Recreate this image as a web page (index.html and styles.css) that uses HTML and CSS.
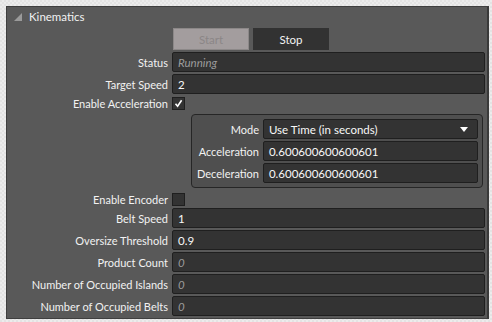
FILE: index.html
```html
<!DOCTYPE html>
<html lang="en">
<head>
	<meta charset="UTF-8">
	<title>Kinematics</title>
	<link rel="stylesheet" href="styles.css">
</head>
<body>
	<div class="panel">
		<div class="panel-head">
			<svg class="expander" width="8" height="8" viewBox="0 0 8 8"><polygon points="8,0 8,8 0,8" fill="#9a9a9a"/></svg>
			<span>Kinematics</span>
		</div>
		<div class="props">
			<div class="label"></div>
			<div class="buttons">
				<span class="btn btn-disabled">Start</span>
				<span class="btn">Stop</span>
			</div>

			<div class="label">Status</div>
			<div class="field readonly">Running</div>

			<div class="label">Target Speed</div>
			<div class="field">2</div>

			<div class="label label-small">Enable Acceleration</div>
			<div class="check-cell">
				<span class="check"><svg width="11" height="11" viewBox="0 0 11 11"><path d="M2.5 5.8 L4.6 8.2 L8.6 2.3" fill="none" stroke="#fff" stroke-width="1.6"/></svg></span>
			</div>

			<div class="label"></div>
			<div class="group">
				<div class="label">Mode</div>
				<div class="field select">Use Time (in seconds)<svg class="caret" width="8" height="5" viewBox="0 0 8 5"><polygon points="0,0 8,0 4,5" fill="#fff"/></svg></div>
				<div class="label">Acceleration</div>
				<div class="field">0.600600600600601</div>
				<div class="label">Deceleration</div>
				<div class="field">0.600600600600601</div>
			</div>

			<div class="label label-small">Enable Encoder</div>
			<div class="check-cell"><span class="check"></span></div>

			<div class="label">Belt Speed</div>
			<div class="field">1</div>

			<div class="label">Oversize Threshold</div>
			<div class="field">0.9</div>

			<div class="label">Product Count</div>
			<div class="field readonly">0</div>

			<div class="label">Number of Occupied Islands</div>
			<div class="field readonly">0</div>

			<div class="label">Number of Occupied Belts</div>
			<div class="field readonly">0</div>
		</div>
	</div>
</body>
</html>
```

FILE: styles.css
```css
*{
	margin: 0;
	padding: 0;
	box-sizing: border-box;
}
body{
	width: 492px;
	height: 322px;
	overflow: hidden;
	background: repeating-conic-gradient(#ececec 0 25%, #e3e3e3 0 50%) 0 0/4px 4px;
	font-family: Lato, "Open Sans", sans-serif;
	font-size: 11px;
	color: #f2f2f2;
	padding: 6px 3px 0 6px;
}
.panel{
	width: 483px;
	height: 313px;
	background: #595959;
	border: 1px solid #3f3f3f;
	border-right: 2px solid #3a3a3a;
	display: flex;
	flex-direction: column;
}
.panel-head{
	height: 21px;
	display: flex;
	align-items: center;
	padding: 0 0 3px 7px;
	font-size: 11.5px;
}
.expander{
	margin-right: 7px;
	margin-top: 1px;
}
.props{
	display: grid;
	grid-template-columns: 161px 1fr;
	column-gap: 4px;
	row-gap: 2px;
	padding-right: 2px;
}
.label{
	display: flex;
	align-items: center;
	justify-content: flex-end;
	white-space: nowrap;
	height: 20px;
}
.label-small{
	height: 14px;
}
.buttons{
	display: flex;
	gap: 4px;
	height: 22px;
	padding-left: 1px;
}
.btn{
	width: 76px;
	display: flex;
	align-items: center;
	justify-content: center;
	background: #323232;
	color: #f2f2f2;
	font-size: 11.5px;
}
.btn-disabled{
	background: #a39d9e;
	color: #8b8687;
	border: 1px solid #8c8888;
}
.field{
	height: 20px;
	background: #333333;
	border: 1px solid #1f1f1f;
	border-radius: 2px;
	padding-left: 5px;
	display: flex;
	align-items: center;
	font-size: 11.5px;
	color: #f8f8f8;
}
.readonly{
	font-style: italic;
	color: #9c9c9c;
}
.check-cell{
	height: 14px;
	display: flex;
	align-items: flex-end;
}
.check{
	width: 13px;
	height: 13px;
	background: #333333;
	border: 1px solid #1f1f1f;
	display: flex;
	align-items: center;
	justify-content: center;
}
.group{
	margin: 2px 2px 2px 19px;
	border: 1px solid #262626;
	border-radius: 4px;
	background: #4f4f4f;
	padding: 4px 4px 4px 5px;
	display: grid;
	grid-template-columns: auto 1fr;
	column-gap: 4px;
	row-gap: 2px;
}
.select{
	justify-content: space-between;
	padding-right: 9px;
}
.caret{
	margin-top: 1px;
}
```
